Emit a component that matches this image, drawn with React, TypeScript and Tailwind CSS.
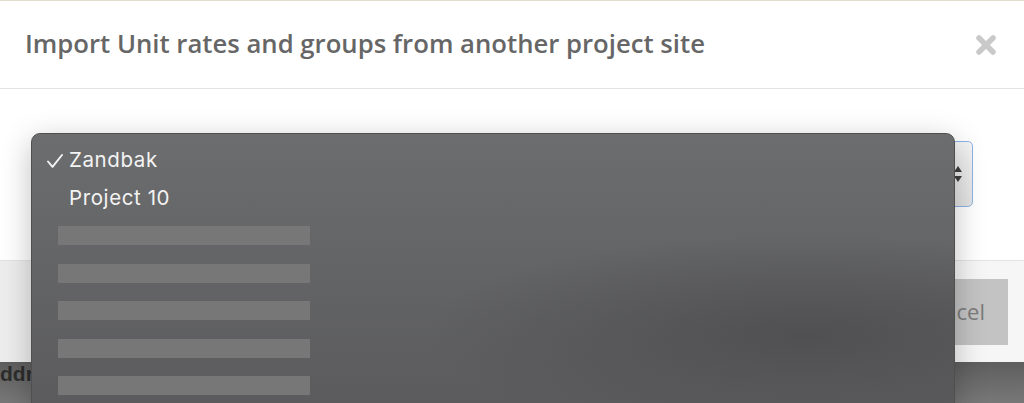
const redacted = [0, 1, 2, 3, 4];

function CloseIcon() {
  return (
    <svg width="22" height="22" viewBox="0 0 22 22" fill="none">
      <path d="M4 4L18 18M18 4L4 18" stroke="#c9c9c9" strokeWidth="5.5" strokeLinecap="round" />
    </svg>
  );
}

function CheckIcon() {
  return (
    <svg width="16" height="14" viewBox="0 0 16 14" fill="none">
      <polyline points="1,7.5 5.5,12.8 15,1" stroke="#f4f4f4" strokeWidth="1.9" strokeLinecap="round" strokeLinejoin="round" />
    </svg>
  );
}

export default function App() {
  return (
    <div className="relative w-[1024px] h-[403px] overflow-hidden bg-white font-['Open_Sans',sans-serif]">
      {/* modal */}
      <div className="h-px bg-[#e2dece]" />
      <div className="h-[88px] flex items-center justify-between pl-[25px] pr-[27px] border-b border-[#e3e3e3]">
        <h4 className="text-[25.7px] font-semibold text-[#666]">Import Unit rates and groups from another project site</h4>
        <CloseIcon />
      </div>
      <div className="h-[171px] pt-[52px] pl-[80px] pr-[51px]">
        <div className="h-[66px] rounded-[5px] border border-[#8db2e6] bg-gradient-to-b from-[#f4f4f4] to-[#e2e2e2] flex items-center justify-end pr-[10px]">
          <svg width="8" height="16" viewBox="0 0 8 16">
            <polygon points="0,6 4,0 8,6" fill="#3f3f3f" />
            <polygon points="0,10 4,16 8,10" fill="#3f3f3f" />
          </svg>
        </div>
      </div>
      <div className="h-[102px] border-t border-[#e3e3e3] bg-gradient-to-r from-[#ededed] to-[#f6f6f6] flex items-center justify-end pr-4">
        <button className="h-[66px] px-[23px] bg-[#c3c3c3] text-[22px] text-[#7b7b7b]">Cancel</button>
      </div>
      <div className="h-[41px] bg-gradient-to-b from-[#5e5e5e] to-[#787878] flex items-start">
        <span className="leading-[24px] text-[21px] font-bold text-[#2d2d2d] font-['Liberation_Sans',sans-serif]">ddr</span>
      </div>

      {/* native select menu */}
      <div className="absolute left-[31px] top-[133px] w-[924px] h-[290px] rounded-t-[9px] border border-[#4f4f4f] shadow-[0_8px_30px_rgba(0,0,0,0.25)] bg-[radial-gradient(ellipse_at_84%_70%,#505053_0%,rgba(80,80,82,0)_35%),linear-gradient(to_bottom,#6c6d6e,#5a5a5c)] pt-[8px] font-['Inter',sans-serif] text-[20.5px] text-[#f3f3f3] tracking-[0.6px]">
        <div className="h-[37.5px] flex items-center">
          <span className="w-[37px] pl-[15px]">
            <CheckIcon />
          </span>
          Zandbak
        </div>
        <div className="h-[37.5px] flex items-center pl-[37px]">Project 10</div>
        {redacted.map((i) => (
          <div key={i} className="h-[37.5px] flex items-center pl-[26px]">
            <span className="w-[252px] h-[19px] bg-[#777]" />
          </div>
        ))}
      </div>
    </div>
  );
}
